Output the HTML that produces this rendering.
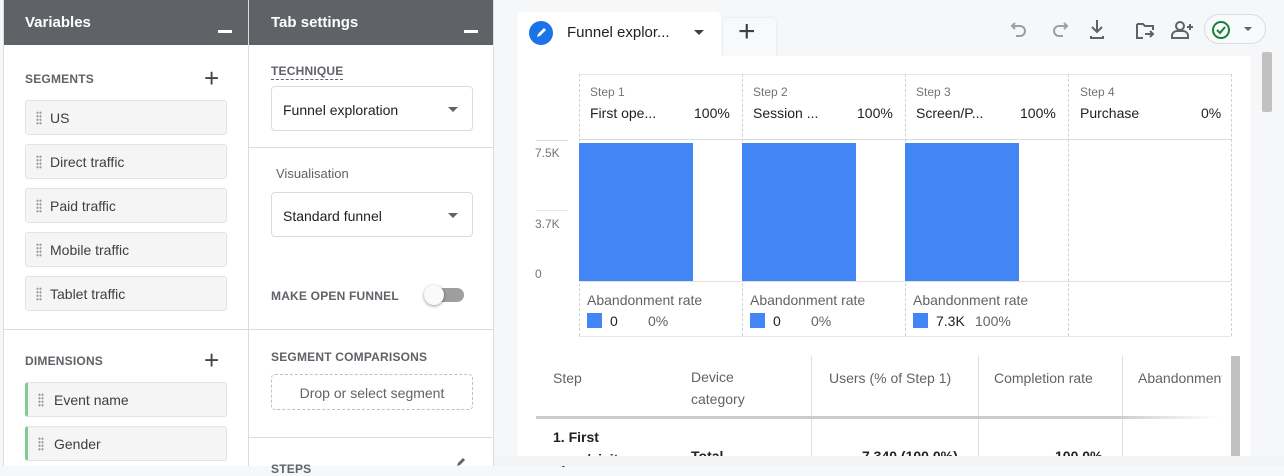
<!DOCTYPE html>
<html><head><style>
*{box-sizing:border-box;margin:0;padding:0}
body{width:1284px;height:466px;overflow:hidden;background:#f6f7f8;font-family:"Liberation Sans",sans-serif;color:#3c4043;position:relative}
.a{position:absolute}
.panel{background:#fff;border-right:1px solid #dadce0}
.hdr{background:#5f6368;color:#fff;font-weight:bold;font-size:15px;height:45px;padding:14px 0 0 22px}
.dash{position:absolute;right:16px;top:30px;width:14px;height:3px;background:#fff}
.sec{font-size:12px;font-weight:bold;color:#5f6368;letter-spacing:.2px}
.chip{position:absolute;left:25px;width:202px;height:35px;background:#f5f5f5;border:1px solid #e3e3e3;border-radius:3px;font-size:14px;color:#3c4043;padding:9px 0 0 24px}
.chip:before{content:"";position:absolute;left:10px;top:10px;width:6px;height:14px;background:radial-gradient(circle,#9aa0a6 1px,transparent 1.3px) 0 0/3px 3.5px}
.chip.g{border-left:3px solid #81c995;padding-left:26px}
.plus{position:absolute;font-size:26px;color:#444;font-weight:300;line-height:20px}
.sel{position:absolute;left:271px;width:202px;height:45px;border:1px solid #dadce0;border-radius:4px;font-size:14px;padding:15px 0 0 11px;color:#202124}
.sel:after{content:"";position:absolute;right:14px;top:20px;border:5px solid transparent;border-top:5px solid #5f6368}
.hl{position:absolute;height:1px;background:#dadce0}
.vd{position:absolute;width:0;border-left:1px dashed #d0d0d0}
.bar{position:absolute;background:#4285f4;top:143px;height:138px;width:114px}
.s{font-size:12px;color:#70757a}
.t{font-size:14px;color:#202124}
.th{font-size:14px;color:#5f6368}
</style></head><body>
<div class="a panel" style="left:3px;top:0;width:246px;height:466px;border-left:1px solid #dadce0">
<div class="hdr" style="padding-left:21px">Variables<div class="dash"></div></div></div>
<div class="a sec" style="left:25px;top:72px">SEGMENTS</div>
<div class="plus" style="left:204px;top:68px">+</div>
<div class="chip" style="top:100px">US</div>
<div class="chip" style="top:144px">Direct traffic</div>
<div class="chip" style="top:188px">Paid traffic</div>
<div class="chip" style="top:232px">Mobile traffic</div>
<div class="chip" style="top:276px">Tablet traffic</div>
<div class="hl" style="left:3px;top:329px;width:246px"></div>
<div class="a sec" style="left:25px;top:354px">DIMENSIONS</div>
<div class="plus" style="left:204px;top:350px">+</div>
<div class="chip g" style="top:382px">Event name</div>
<div class="chip g" style="top:426px">Gender</div>
<div class="a panel" style="left:249px;top:0;width:245px;height:466px">
<div class="hdr">Tab settings<div class="dash" style="right:15px"></div></div></div>
<div class="a sec" style="left:271px;top:64px;border-bottom:1px dashed #5f6368;padding-bottom:1px">TECHNIQUE</div>
<div class="sel" style="top:86px">Funnel exploration</div>
<div class="hl" style="left:249px;top:147px;width:245px"></div>
<div class="a" style="left:276px;top:166px;font-size:13px;color:#5f6368">Visualisation</div>
<div class="sel" style="top:192px">Standard funnel</div>
<div class="a sec" style="left:271px;top:289px">MAKE OPEN FUNNEL</div>
<div class="a" style="left:430px;top:288px;width:34px;height:14px;border-radius:7px;background:#9e9e9e"></div>
<div class="a" style="left:424px;top:285px;width:20px;height:20px;border-radius:50%;background:#fafafa;box-shadow:0 1px 3px rgba(0,0,0,.4)"></div>
<div class="hl" style="left:249px;top:329px;width:245px"></div>
<div class="a sec" style="left:271px;top:350px">SEGMENT COMPARISONS</div>
<div class="a" style="left:271px;top:374px;width:202px;height:36px;border:1px dashed #bdc1c6;border-radius:4px;font-size:14px;color:#5f6368;text-align:center;padding-top:10px">Drop or select segment</div>
<div class="hl" style="left:249px;top:437px;width:245px"></div>
<div class="a sec" style="left:271px;top:462px">STEPS</div>
<svg class="a" style="left:455px;top:456px" width="14" height="10"><path d="M2 10l1-3 5-5 2 2-5 5z" fill="#5f6368"/></svg>
<div class="a" style="left:517px;top:12px;width:204px;height:45px;background:#fff;border-radius:6px 6px 0 0"></div>
<div class="a" style="left:529px;top:21px;width:24px;height:24px;border-radius:50%;background:#1a73e8"><svg width="24" height="24"><path d="M8 16l1-3 6-6 2 2-6 6z" fill="#fff"/></svg></div>
<div class="a" style="left:567px;top:24px;font-size:15px;color:#202124">Funnel explor...</div>
<div class="a" style="left:694px;top:30px;border:5px solid transparent;border-top:5px solid #3c4043"></div>
<div class="a" style="left:723px;top:18px;width:53px;height:38px;background:#f8f9fa;border-radius:4px 4px 0 0;box-shadow:0 0 2px rgba(0,0,0,.1)"></div>
<div class="plus" style="left:738px;top:22px;font-size:30px;color:#3c4043">+</div>
<svg class="a" style="left:1008px;top:16px" width="200" height="28" fill="none" stroke-width="2">
<path d="M7 7l-3 3 3 3M4 10h8a5 5 0 010 10h-4" stroke="#9aa0a6"/>
<path d="M56 7l3 3-3 3M59 10h-8a5 5 0 000 10h4" stroke="#9aa0a6"/>
<path d="M89 4v12M84 11l5 5 5-5M83 20v2h12v-2" stroke="#5f6368"/>
<path d="M129 8v14h6M129 8h6l2 2h8v4M137 18h8M142 15l3 3-3 3" stroke="#5f6368"/>
<circle cx="172" cy="10" r="4" stroke="#5f6368"/><path d="M164 22v-2a5 5 0 015-5h6a5 5 0 015 4v3z M182 8v6M179 11h6" stroke="#5f6368"/>
</svg>
<div class="a" style="left:1204px;top:14px;width:62px;height:30px;border:1px solid #dadce0;border-radius:15px;background:#f8f9fa"></div>
<svg class="a" style="left:1211px;top:20px" width="20" height="20"><circle cx="10" cy="10" r="8" fill="none" stroke="#188038" stroke-width="2"/><path d="M6 10l3 3 5-6" fill="none" stroke="#188038" stroke-width="2"/></svg>
<div class="a" style="left:1244px;top:27px;border:4px solid transparent;border-top:4px solid #5f6368"></div>
<div class="a" style="left:517px;top:56px;width:734px;height:400px;background:#fff"></div>
<div class="a" style="left:1262px;top:52px;width:10px;height:60px;background:#c1c1c1;border-radius:2px"></div>
<div class="hl" style="left:579px;top:74px;width:652px;background:#e8e8e8"></div>
<div class="hl" style="left:579px;top:139px;width:652px;background:#dadce0"></div>
<div class="hl" style="left:536px;top:140px;width:32px;background:#dadce0"></div>
<div class="hl" style="left:536px;top:210px;width:32px;background:#e8e8e8"></div>
<div class="hl" style="left:579px;top:336px;width:652px;background:#e8e8e8"></div>
<div class="vd" style="left:579px;top:74px;height:262px"></div>
<div class="vd" style="left:742px;top:74px;height:262px"></div>
<div class="vd" style="left:905px;top:74px;height:262px"></div>
<div class="vd" style="left:1068px;top:74px;height:262px"></div>
<div class="vd" style="left:1231px;top:74px;height:262px"></div>
<div class="a s" style="left:535px;top:146px">7.5K</div>
<div class="a s" style="left:535px;top:217px">3.7K</div>
<div class="a s" style="left:535px;top:267px">0</div>
<div class="bar" style="left:579px"></div><div class="bar" style="left:742px"></div><div class="bar" style="left:905px"></div>
<div class="hl" style="left:579px;top:281px;width:652px;background:#e0e0e0"></div>
<div class="a s" style="left:590px;top:85px">Step 1</div><div class="a t" style="left:590px;top:105px">First ope...</div><div class="a t" style="left:694px;top:105px">100%</div>
<div class="a s" style="left:753px;top:85px">Step 2</div><div class="a t" style="left:753px;top:105px">Session ...</div><div class="a t" style="left:857px;top:105px">100%</div>
<div class="a s" style="left:916px;top:85px">Step 3</div><div class="a t" style="left:916px;top:105px">Screen/P...</div><div class="a t" style="left:1020px;top:105px">100%</div>
<div class="a s" style="left:1080px;top:85px">Step 4</div><div class="a t" style="left:1080px;top:105px">Purchase</div><div class="a t" style="left:1201px;top:105px">0%</div>
<div class="a th" style="left:587px;top:292px">Abandonment rate</div>
<div class="a" style="left:587px;top:313px;width:15px;height:15px;background:#4285f4"></div><div class="a t" style="left:610px;top:313px">0</div><div class="a th" style="left:648px;top:313px">0%</div>
<div class="a th" style="left:750px;top:292px">Abandonment rate</div>
<div class="a" style="left:750px;top:313px;width:15px;height:15px;background:#4285f4"></div><div class="a t" style="left:773px;top:313px">0</div><div class="a th" style="left:811px;top:313px">0%</div>
<div class="a th" style="left:913px;top:292px">Abandonment rate</div>
<div class="a" style="left:913px;top:313px;width:15px;height:15px;background:#4285f4"></div><div class="a t" style="left:936px;top:313px">7.3K</div><div class="a th" style="left:975px;top:313px">100%</div>
<div class="a" style="left:811px;top:356px;width:1px;height:100px;background:#e0e0e0"></div>
<div class="a" style="left:978px;top:356px;width:1px;height:100px;background:#e0e0e0"></div>
<div class="a" style="left:1122px;top:356px;width:1px;height:100px;background:#e0e0e0"></div>
<div class="a th" style="left:553px;top:370px">Step</div>
<div class="a th" style="left:691px;top:366px;line-height:22px">Device<br>category</div>
<div class="a th" style="left:829px;top:370px">Users (% of Step 1)</div>
<div class="a th" style="left:994px;top:370px">Completion rate</div>
<div class="a th" style="left:1138px;top:370px;width:84px;overflow:hidden;white-space:nowrap">Abandonment</div>
<div class="a" style="left:536px;top:416px;width:684px;height:3px;background:linear-gradient(90deg,#ccc,#ccc 85%,#fff)"></div>
<div class="a" style="left:1231px;top:356px;width:9px;height:100px;background:#c1c1c1"></div>
<div class="a t" style="left:553px;top:426px;font-weight:bold;line-height:22px">1. First<br>open/visit</div>
<div class="a t" style="left:691px;top:448px;font-weight:bold">Total</div>
<div class="a t" style="left:862px;top:448px;font-weight:bold">7,340 (100.0%)</div>
<div class="a t" style="left:1055px;top:448px;font-weight:bold">100.0%</div>
<div class="a" style="left:494px;top:456px;width:790px;height:10px;background:#f1f3f4"></div>
</body></html>
